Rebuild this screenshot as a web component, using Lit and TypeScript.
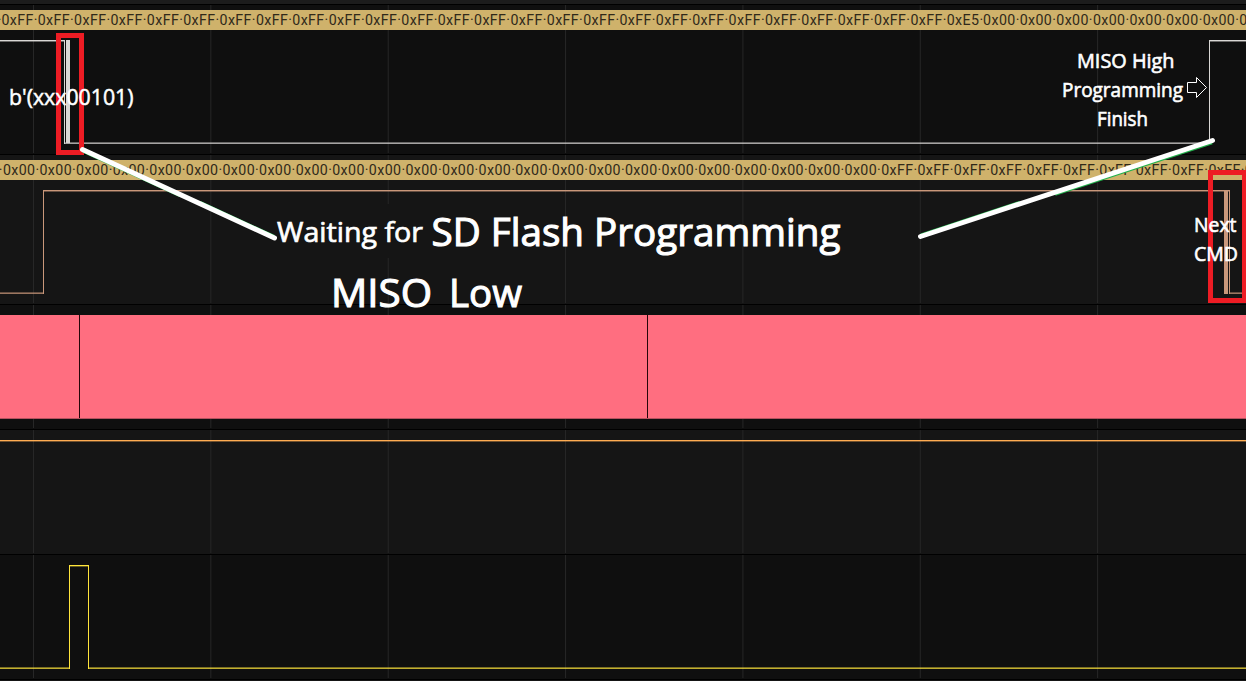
import { LitElement, html, svg, css } from "lit";
import { customElement, property } from "lit/decorators.js";

const WIDTH = 1246;
const GRID = [33, 210.35, 387.7, 565.05, 742.4, 919.75, 1097.1];

interface Lane {
  tone: "dark" | "light";
  height: number;
  bytes?: string[];
  trace: unknown;
}

const repeat = (value: string, count: number) => Array<string>(count).fill(value);

/* A two-pixel level: one solid row and one dim row on the inner side. */
const high = (x1: number, x2: number, y: number, color: string, dim = 0.45) => svg`
  <rect x=${x1} y=${y} width=${x2 - x1} height="1" fill=${color}></rect>
  <rect x=${x1} y=${y + 1} width=${x2 - x1} height="1" fill=${color} opacity=${dim}></rect>`;
const low = (x1: number, x2: number, y: number, color: string) => svg`
  <rect x=${x1} y=${y} width=${x2 - x1} height="1" fill=${color} opacity="0.45"></rect>
  <rect x=${x1} y=${y + 1} width=${x2 - x1} height="1" fill=${color} opacity="0.75"></rect>`;
const edge = (x: number, y1: number, y2: number, color: string, width = 1) => svg`
  <rect x=${x} y=${y1} width=${width} height=${y2 - y1} fill=${color}></rect>`;

const WHITE = "#d9d7d5";
const COPPER = "#c9977a";
const YELLOW = "#ffe53b";

const LANES: Lane[] = [
  {
    tone: "dark",
    height: 149,
    bytes: [...repeat("0xFF", 26), "0xE5", ...repeat("0x00", 8)],
    trace: svg`
      ${high(0, 65, 35, WHITE)} ${edge(64, 35, 139, WHITE)} ${edge(66, 35, 138, WHITE, 4)}
      ${low(65, 1210, 137, WHITE)} ${edge(1209, 35, 138, WHITE)} ${high(1209, WIDTH, 35, WHITE)}`,
  },
  {
    tone: "light",
    height: 149,
    bytes: [...repeat("0x00", 24), ...repeat("0xFF", 11)],
    trace: svg`
      ${low(0, 44, 137, COPPER)} ${edge(43, 35, 139, COPPER)} ${high(43, 1230, 35, COPPER)}
      ${edge(1224, 35, 139, COPPER, 4)} ${edge(1229, 35, 139, COPPER)} ${low(1229, WIDTH, 137, COPPER)}`,
  },
  {
    tone: "dark",
    height: 124,
    trace: svg`
      <rect x="0" y="10" width=${WIDTH} height="103" fill="#ff6e80"></rect>
      <rect x="0" y="113" width=${WIDTH} height="1" fill="#b5525e"></rect>
      ${edge(79, 10, 113, "#26060a")} ${edge(647, 10, 113, "#26060a")}`,
  },
  { tone: "light", height: 124, trace: high(0, WIDTH, 10, "#ffac52", 0.4) },
  {
    tone: "dark",
    height: 124,
    trace: svg`
      ${low(0, 70, 112, YELLOW)} ${edge(69, 10, 114, YELLOW)} ${high(69, 89, 10, YELLOW, 0.35)}
      ${edge(88, 10, 114, YELLOW)} ${low(89, WIDTH, 112, YELLOW)}`,
  },
];

@customElement("signal-lane")
class SignalLane extends LitElement {
  @property({ attribute: false }) lane!: Lane;

  static styles = css`
    :host {
      display: block;
      flex: none;
      border-bottom: 1px solid #000;
    }
    .lane {
      display: grid;
      overflow: hidden;
    }
    .dark {
      background: #0f0f0f;
    }
    .light {
      background: #151515;
    }
    .plot,
    .tape {
      grid-area: 1 / 1;
    }
    .plot {
      display: block;
      width: 1246px;
    }
    .tape {
      align-self: start;
      display: flex;
      height: 20px;
      margin-top: 5px;
      overflow: hidden;
      background: #cfb26b;
      color: #30291a;
      font: 14.2px/20px Roboto, sans-serif;
      white-space: nowrap;
    }
    .dot,
    .byte {
      flex: none;
    }
    .dot {
      width: 1.4px;
      text-indent: -2.2px;
    }
    .light .dot {
      width: 2.9px;
      text-indent: -1.2px;
    }
    .byte {
      display: flex;
      justify-content: space-between;
      width: 36.36px;
      letter-spacing: 0.4px;
    }
    .zero {
      width: 36.6px;
    }
  `;

  render() {
    const { tone, height, bytes, trace } = this.lane;
    return html`<div class="lane ${tone}">
      <svg class="plot" height=${height} viewBox="0 0 ${WIDTH} ${height}">
        ${GRID.map((x) => svg`<rect x=${x} y="0" width="1" height=${height - 1} fill="#272727"></rect>`)}
        ${trace}
      </svg>
      ${bytes
        ? html`<div class="tape">
            <span class="dot">·</span>
            ${bytes.map((b) => html`<span class="byte ${b === "0x00" ? "zero" : ""}"><span>${b}</span><span>·</span></span>`)}
          </div>`
        : ""}
    </div>`;
  }
}

@customElement("app-root")
class AppRoot extends LitElement {
  static styles = css`
    :host {
      display: block;
      position: relative;
      width: 1246px;
      height: 681px;
      overflow: hidden;
      background: #151515;
    }
    .lanes {
      display: flex;
      flex-direction: column;
    }
    .head {
      height: 4px;
      background: #1c1c1c;
      border-bottom: 1px solid #000;
    }
    .notes {
      position: absolute;
      inset: 0;
      fill: #fff;
      font-family: "Open Sans", "Noto Sans", sans-serif;
      font-weight: 500;
    }
    .small,
    .code,
    .medium,
    .large {
      stroke: #fff;
    }
    .small {
      font-size: 19.5px;
      stroke-width: 0.6;
    }
    .code {
      font-size: 21.5px;
      stroke-width: 0.5;
    }
    .medium {
      font-size: 28px;
      stroke-width: 0.7;
    }
    .large {
      font-size: 39px;
      stroke-width: 1.1;
    }
    .box {
      fill: none;
      stroke: #ed1c24;
      stroke-width: 5;
    }
    .pointer {
      stroke: #fff;
      stroke-width: 5;
      stroke-linecap: round;
    }
    .fringe {
      stroke: #22b14c;
      stroke-width: 4;
    }
    .arrow {
      fill: none;
      stroke: #fff;
    }
  `;

  private label(cls: string, x: number, y: number, width: number, text: string) {
    return svg`<text class=${cls} x=${x} y=${y} textLength=${width} lengthAdjust="spacingAndGlyphs">${text}</text>`;
  }

  render() {
    return html`
      <div class="lanes">
        <div class="head"></div>
        ${LANES.map((lane) => html`<signal-lane .lane=${lane}></signal-lane>`)}
      </div>
      <svg class="notes" width="1246" height="681" viewBox="0 0 1246 681">
        <rect x="277" y="204" width="150" height="54" fill="#151515"></rect>
        <rect class="box" x="58.5" y="35.5" width="23" height="117"></rect>
        <rect class="box" x="1210.5" y="172.5" width="34" height="128"></rect>
        <line class="fringe" x1="83" y1="150.6" x2="180" y2="195.3"></line>
        <line class="fringe" x1="200" y1="202.8" x2="274" y2="236.9"></line>
        <line class="fringe" x1="1212" y1="142.3" x2="1055" y2="193.8"></line>
        <line class="fringe" x1="1020" y1="202.7" x2="921" y2="235.3"></line>
        <line class="pointer" x1="82.5" y1="149.5" x2="274.5" y2="238"></line>
        <line class="pointer" x1="1212.5" y1="140.5" x2="920.5" y2="236.5"></line>
        <path class="arrow" d="M1187.5 82.5H1196.5V77.5L1206.5 87.5L1196.5 97.5V92.5H1187.5Z"></path>
        ${this.label("code", 9, 105, 124.5, "b'(xxx00101)")}
        ${this.label("small", 1077, 68, 97.5, "MISO High")}
        ${this.label("small", 1062, 97, 121, "Programming")}
        ${this.label("small", 1097, 126, 51, "Finish")}
        ${this.label("small", 1194, 232, 42.5, "Next")}
        ${this.label("small", 1194, 261, 44, "CMD")}
        ${this.label("medium", 277, 242, 146, "Waiting for")}
        ${this.label("large", 431.5, 246, 409, "SD Flash Programming")}
        ${this.label("large", 331, 307, 101, "MISO")}
        ${this.label("large", 449, 307, 73, "Low")}
      </svg>
    `;
  }
}
